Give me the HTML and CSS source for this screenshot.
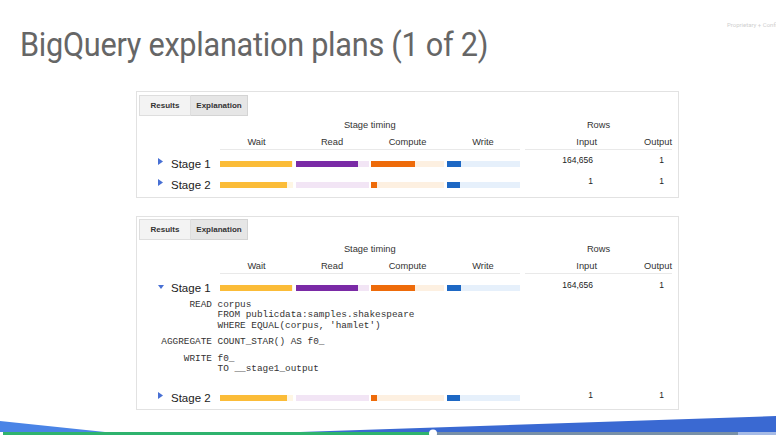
FILE: index.html
```html
<!DOCTYPE html>
<html>
<head>
<meta charset="utf-8">
<link rel="stylesheet" href="styles.css">
</head>
<body>
<div class="page">
  <header class="top">
    <h1 class="title">BigQuery explanation plans (1 of 2)</h1>
    <span class="brand">Proprietary + Confidential</span>
  </header>

  <section class="panel panel-1">
    <div class="tabs">
      <div class="tab">Results</div>
      <div class="tab active">Explanation</div>
    </div>
    <div class="hrow h1row">
      <div class="lbl"></div>
      <div class="timing-head">Stage timing</div>
      <div class="rows-head">Rows</div>
    </div>
    <div class="hrow h2row">
      <div class="lbl"></div>
      <div class="cols">
        <div class="col">Wait</div><div class="col">Read</div><div class="col">Compute</div><div class="col">Write</div>
      </div>
      <div class="rcols">
        <div class="rin">Input</div><div class="rout">Output</div>
      </div>
    </div>
    <div class="srow">
      <div class="lbl"><svg class="tri" width="5" height="7" viewBox="0 0 5 7"><path d="M0 0 L5 3.5 L0 7 Z"/></svg><span>Stage 1</span></div>
      <div class="bars">
        <div class="seg wait"><i style="width:99%"></i></div>
        <div class="seg read"><i style="width:86%"></i></div>
        <div class="seg comp"><i style="width:60%"></i></div>
        <div class="seg write"><i style="width:20%"></i></div>
      </div>
      <div class="vals"><div class="vin">164,656</div><div class="vout">1</div></div>
    </div>
    <div class="srow">
      <div class="lbl"><svg class="tri" width="5" height="7" viewBox="0 0 5 7"><path d="M0 0 L5 3.5 L0 7 Z"/></svg><span>Stage 2</span></div>
      <div class="bars">
        <div class="seg wait"><i style="width:92%"></i></div>
        <div class="seg read"><i style="width:0%"></i></div>
        <div class="seg comp"><i style="width:8%"></i></div>
        <div class="seg write"><i style="width:18%"></i></div>
      </div>
      <div class="vals"><div class="vin">1</div><div class="vout">1</div></div>
    </div>
  </section>

  <section class="panel panel-2">
    <div class="tabs">
      <div class="tab">Results</div>
      <div class="tab active">Explanation</div>
    </div>
    <div class="hrow h1row">
      <div class="lbl"></div>
      <div class="timing-head">Stage timing</div>
      <div class="rows-head">Rows</div>
    </div>
    <div class="hrow h2row">
      <div class="lbl"></div>
      <div class="cols">
        <div class="col">Wait</div><div class="col">Read</div><div class="col">Compute</div><div class="col">Write</div>
      </div>
      <div class="rcols">
        <div class="rin">Input</div><div class="rout">Output</div>
      </div>
    </div>
    <div class="srow">
      <div class="lbl"><svg class="tri-down" width="6" height="4" viewBox="0 0 6 4"><path d="M0 0 L6 0 L3 4 Z"/></svg><span>Stage 1</span></div>
      <div class="bars">
        <div class="seg wait"><i style="width:99%"></i></div>
        <div class="seg read"><i style="width:86%"></i></div>
        <div class="seg comp"><i style="width:60%"></i></div>
        <div class="seg write"><i style="width:20%"></i></div>
      </div>
      <div class="vals"><div class="vin">164,656</div><div class="vout">1</div></div>
    </div>
    <div class="code">
      <div class="grp"><div class="kw">READ</div><div class="body">corpus<br>FROM publicdata:samples.shakespeare<br>WHERE EQUAL(corpus, 'hamlet')</div></div>
      <div class="grp"><div class="kw">AGGREGATE</div><div class="body">COUNT_STAR() AS f0_</div></div>
      <div class="grp"><div class="kw">WRITE</div><div class="body">f0_<br>TO __stage1_output</div></div>
    </div>
    <div class="srow last">
      <div class="lbl"><svg class="tri" width="5" height="7" viewBox="0 0 5 7"><path d="M0 0 L5 3.5 L0 7 Z"/></svg><span>Stage 2</span></div>
      <div class="bars">
        <div class="seg wait"><i style="width:92%"></i></div>
        <div class="seg read"><i style="width:0%"></i></div>
        <div class="seg comp"><i style="width:8%"></i></div>
        <div class="seg write"><i style="width:18%"></i></div>
      </div>
      <div class="vals"><div class="vin">1</div><div class="vout">1</div></div>
    </div>
  </section>

  <footer class="foot">
    <svg width="776" height="20" viewBox="0 0 776 20">
      <polygon points="0,6 105,17 0,17" fill="#4a84e6"/>
      <polygon points="300,17 776,1 776,17" fill="#3a69d2"/>
      <rect x="0" y="17" width="776" height="3" fill="#ffffff"/>
      <rect x="3" y="17" width="430" height="3" fill="#2fb36e"/>
      <rect x="433" y="17" width="305" height="3" fill="#7890a8"/>
      <rect x="738" y="17" width="38" height="3" fill="#a6bbe6"/>
      <circle cx="433" cy="18.5" r="4" fill="#ffffff"/>
    </svg>
  </footer>
</div>
</body>
</html>
```

FILE: styles.css
```css
html, body {
  margin: 0;
  padding: 0;
  background: #ffffff;
}
.page {
  width: 776px;
  height: 435px;
  overflow: hidden;
  display: flex;
  flex-direction: column;
  font-family: "Liberation Sans", Arial, sans-serif;
  color: #222;
}
.top {
  display: flex;
  align-items: flex-start;
  height: 91px;
  padding-left: 20px;
  box-sizing: border-box;
}
.title {
  flex: 0 0 707px;
  margin: 26px 0 0 0;
  font-family: Roboto, "Liberation Sans", sans-serif;
  font-weight: 400;
  font-size: 33px;
  line-height: 38px;
  color: #666666;
  letter-spacing: -0.3px;
  white-space: nowrap;
  transform: scaleX(0.93);
  transform-origin: left center;
}
.brand {
  flex: none;
  margin-top: 21px;
  font-family: Roboto, "Liberation Sans", sans-serif;
  font-size: 6px;
  color: #cfcfcf;
  white-space: nowrap;
}
.panel {
  margin-left: 136px;
  width: 543px;
  box-sizing: border-box;
  border: 1px solid #e2e2e2;
  display: flex;
  flex-direction: column;
}
.panel-1 {
  padding-bottom: 1.5px;
}
.panel-2 {
  margin-top: 18px;
  padding-bottom: 0.5px;
}
.tabs {
  display: flex;
  margin: 2.5px 0 0 2px;
  height: 21px;
}
.tab {
  box-sizing: border-box;
  height: 21px;
  line-height: 19px;
  font-size: 8px;
  font-weight: 700;
  color: #333;
  text-align: center;
  background: #f3f3f3;
  border: 1px solid #dedede;
  width: 52px;
}
.tab.active {
  width: 57px;
  background: #e6e6e6;
  border-color: #d4d4d4;
  border-left: none;
}
.hrow {
  display: flex;
  font-size: 9.3px;
  color: #333;
}
.lbl {
  width: 83px;
  flex: none;
  box-sizing: border-box;
}
.h1row {
  margin-top: 2px;
  height: 14px;
  line-height: 14px;
}
.timing-head {
  width: 299.5px;
  text-align: center;
}
.rows-head {
  margin-left: 5.5px;
  width: 147px;
  text-align: center;
}
.h2row {
  margin-top: 3px;
  height: 15px;
  line-height: 14px;
}
.cols {
  display: flex;
  gap: 2.5px;
  width: 299.5px;
  border-bottom: 1px solid #e9e9e9;
}
.col {
  width: 73px;
  text-align: center;
}
.rcols {
  display: flex;
  margin-left: 5.5px;
  width: 147px;
  border-bottom: 1px solid #e9e9e9;
}
.rin {
  width: 75px;
  text-align: right;
  padding-right: 3px;
  box-sizing: border-box;
}
.rout {
  width: 72px;
  text-align: right;
}
.srow {
  display: flex;
  align-items: center;
  height: 21px;
  margin-top: 3.5px;
}
.srow + .srow {
  margin-top: 0;
}
.srow .lbl {
  display: flex;
  align-items: center;
  padding-left: 21px;
  font-size: 11.5px;
  color: #222;
  height: 21px;
}
.srow .lbl span {
  margin-left: 8px;
}
.tri {
  fill: #4870d4;
  flex: none;
  align-self: flex-start;
  margin-top: 4.5px;
}
.tri-down {
  fill: #4870d4;
  flex: none;
  align-self: flex-start;
  margin-top: 7.5px;
  margin-right: -1px;
}
.bars {
  display: flex;
  gap: 2.5px;
  width: 299.5px;
}
.seg {
  width: 73px;
  height: 6px;
  display: flex;
}
.seg i {
  display: block;
  height: 100%;
}
.seg.wait { background: #fef6e4; }
.seg.wait i { background: #fbbc38; }
.seg.read { background: #f2e5f5; }
.seg.read i { background: #7a2aa6; }
.seg.comp { background: #fdf0e1; }
.seg.comp i { background: #ee6b0a; }
.seg.write { background: #e6f0fb; }
.seg.write i { background: #1e68c4; }
.vals {
  display: flex;
  margin-left: 5.5px;
  width: 147px;
  align-self: flex-start;
  padding-top: 1px;
  font-size: 8.5px;
  line-height: 12px;
  color: #222;
}
.vin {
  width: 75px;
  text-align: right;
  padding-right: 7px;
  box-sizing: border-box;
}
.vout {
  width: 72px;
  text-align: right;
  padding-right: 8px;
  box-sizing: border-box;
}
.code {
  padding-left: 24px;
  margin-top: 1px;
  font-family: "Liberation Mono", "Courier New", monospace;
  font-size: 9.4px;
  line-height: 10.5px;
  color: #333;
}
.grp {
  display: grid;
  grid-template-columns: 51px auto;
  column-gap: 5.6px;
  margin-top: 6px;
}
.grp:first-child {
  margin-top: 0;
}
.kw {
  text-align: right;
}
.srow.last {
  margin-top: 13px;
}
.foot {
  margin-top: auto;
  height: 20px;
}
.foot svg {
  display: block;
}
```
